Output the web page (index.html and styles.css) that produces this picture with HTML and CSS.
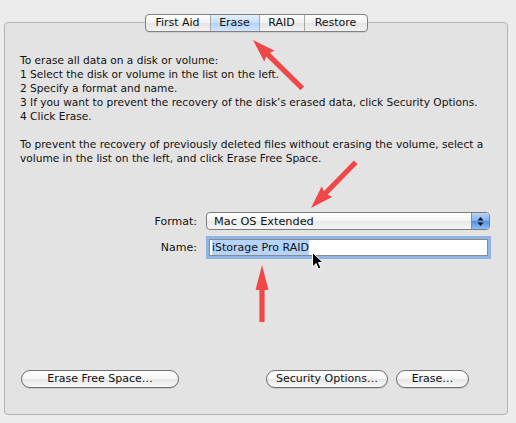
FILE: index.html
```html
<!DOCTYPE html>
<html>
<head>
<meta charset="utf-8">
<link rel="stylesheet" href="styles.css">
</head>
<body>
<div class="panel">
  <div class="tabs">
    <div class="tab tab-first">First Aid</div>
    <div class="tab tab-erase active">Erase</div>
    <div class="tab tab-raid">RAID</div>
    <div class="tab tab-restore">Restore</div>
  </div>
  <div class="info">
    <p>To erase all data on a disk or volume:<br>1 Select the disk or volume in the list on the left.<br>2 Specify a format and name.<br>3 If you want to prevent the recovery of the disk’s erased data, click Security Options.<br>4 Click Erase.</p>
    <p class="p2">To prevent the recovery of previously deleted files without erasing the volume, select a volume in the list on the left, and click Erase Free Space.</p>
  </div>
  <div class="form">
    <label class="lbl">Format:</label>
    <div class="popup">
      <span class="popup-text">Mac OS Extended</span>
      <span class="popup-arrows">
        <svg width="7" height="11" viewBox="0 0 7 11"><path d="M3.5 1 L6.5 4.5 L0.5 4.5 Z M3.5 10 L6.5 6.5 L0.5 6.5 Z" fill="#111"/></svg>
      </span>
    </div>
    <label class="lbl lbl-name">Name:</label>
    <div class="field"><span class="sel">iStorage Pro RAID</span></div>
  </div>
  <div class="buttons">
    <div class="btn btn-free">Erase Free Space…</div>
    <div class="btn-group">
      <div class="btn btn-sec">Security Options…</div>
      <div class="btn btn-erase">Erase…</div>
    </div>
  </div>
</div>
<svg class="overlay" width="516" height="423" viewBox="0 0 516 423">
  <g fill="#f04848">
    <g transform="translate(253 40) rotate(-45.6)">
      <path d="M0 0 L7.5 23 L2.6 21 L2.6 69 L-2.6 69 L-2.6 21 L-7.5 23 Z"/>
    </g>
    <g transform="translate(311 208) rotate(-135.6)">
      <path d="M0 0 L7.5 23 L2.6 21 L2.6 64 L-2.6 64 L-2.6 21 L-7.5 23 Z"/>
    </g>
    <g transform="translate(262 265)">
      <path d="M0 0 L6.5 25 L2.6 25 L2.6 57 L-2.6 57 L-2.6 25 L-6.5 25 Z"/>
    </g>
  </g>
  <path transform="translate(312 252)" d="M0.5 0.5 L0.5 15 L4 11.5 L6.5 17 L9 16 L6.5 10.5 L11 10.5 Z" fill="#000" stroke="#fff" stroke-width="1"/>
</svg>
</body>
</html>
```

FILE: styles.css
```css
html, body {
  margin: 0;
  padding: 0;
}
body {
  width: 516px;
  height: 423px;
  background: #ececec;
  font-family: "Lucida Grande", "DejaVu Sans", sans-serif;
  font-size: 10.6px;
  color: #111;
  position: relative;
  overflow: hidden;
}
.panel {
  margin: 22px 8px 0 4px;
  height: 391px;
  border: 1px solid #b4b4b4;
  border-radius: 4px;
  background: #e3e3e3;
  display: flex;
  flex-direction: column;
}
.tabs {
  align-self: center;
  display: flex;
  margin-top: -9px;
  height: 16px;
  border: 1px solid #808080;
  border-radius: 4px;
  background: linear-gradient(#ffffff, #f0f0f0 50%, #e4e4e4 51%, #f2f2f2);
  overflow: hidden;
  box-shadow: 0 1px 0 rgba(0,0,0,0.08);
}
.tab {
  line-height: 16px;
  text-align: center;
  border-left: 1px solid #a8a8a8;
  font-size: 11px;
}
.tab-first { border-left: none; width: 64px; }
.tab-erase { width: 48px; }
.tab-raid { width: 44px; }
.tab-restore { width: 62px; }
.tab.active {
  background: linear-gradient(#e4f0fd, #c6defa 50%, #b1d1f7 51%, #d3e7fd);
}
.info {
  margin: 21px 0 0 15px;
  line-height: 14px;
}
.info p { margin: 0; }
.info .p2 { margin-top: 14px; width: 475px; }
.form {
  display: grid;
  grid-template-columns: 57px 286px;
  column-gap: 8px;
  row-gap: 6px;
  margin: 47px 0 0 135px;
  align-items: center;
}
.lbl {
  text-align: right;
  font-size: 11px;
}
.popup {
  height: 16px;
  border: 1px solid #7c7c7c;
  border-radius: 4px;
  background: linear-gradient(#ffffff, #f4f4f4 50%, #e8e8e8 51%, #f6f6f6);
  display: flex;
  justify-content: space-between;
  overflow: hidden;
  width: 282px;
  margin-left: 1px;
}
.popup-text {
  line-height: 17px;
  padding-left: 7px;
  font-size: 11.3px;
}
.popup-arrows {
  width: 17px;
  border-left: 1px solid #6d8fc4;
  background: linear-gradient(#b7d4f6, #7fb0ee 50%, #4d8fe4 51%, #8fc0f6);
  display: flex;
  align-items: center;
  justify-content: center;
}
.field {
  height: 15px;
  border: 1px solid #8a8a8a;
  background: #fff;
  box-shadow: 0 0 0 3px #8fb4e6;
  margin: 3px 3px 3px 4px;
  padding: 0 0 0 2px;
  line-height: 15px;
  font-size: 11px;
}
.sel {
  background: #b5d3fb;
  padding: 1px 0 1px 0;
}
.buttons {
  margin-top: auto;
  margin-bottom: 26px;
  display: flex;
  justify-content: space-between;
  padding: 0 38px 0 16px;
}
.btn-group {
  display: flex;
  gap: 8px;
}
.btn {
  height: 16px;
  line-height: 16px;
  border: 1px solid #6e6e6e;
  border-radius: 9px;
  background: linear-gradient(#ffffff, #f4f4f4 50%, #e6e6e6 51%, #f8f8f8);
  text-align: center;
  font-size: 11px;
  box-shadow: 0 1px 1px rgba(0,0,0,0.12);
}
.btn-free { width: 156px; }
.btn-sec { width: 120px; }
.btn-erase { width: 71px; }
.overlay {
  position: absolute;
  left: 0;
  top: 0;
  pointer-events: none;
}
```
